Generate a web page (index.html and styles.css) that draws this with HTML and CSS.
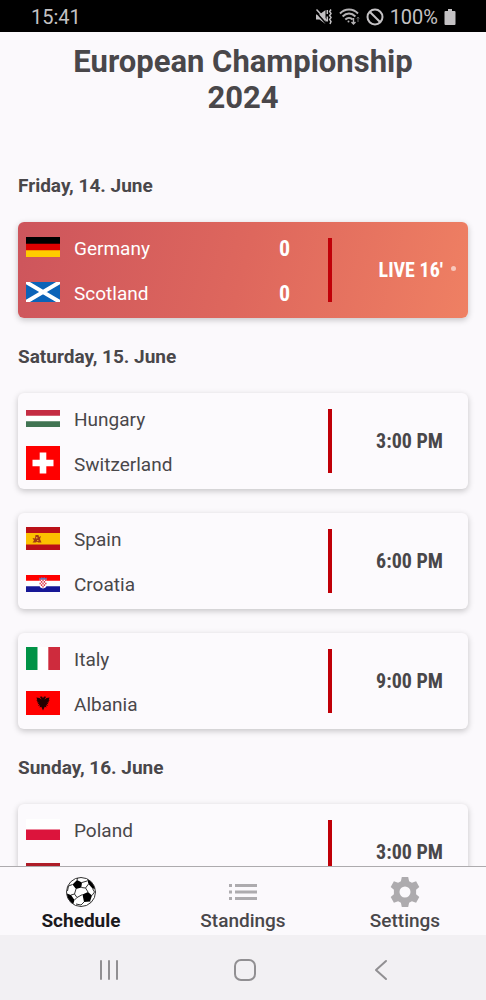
FILE: index.html
```html
<!DOCTYPE html>
<html lang="en">
<head>
<meta charset="utf-8">
<meta name="viewport" content="width=device-width, initial-scale=1">
<title>European Championship 2024</title>
<link rel="stylesheet" href="styles.css">
</head>
<body>
<div class="screen">
  <div class="status">
    <span class="clock">15:41</span>
    <span class="indicators">
      <svg width="18" height="18" viewBox="0 0 18 18" fill="#c4c2c4" aria-hidden="true"><path d="M1 6.500h3.500L10.500 2v14l-6-4.500H1z"/><path d="M0 3L12 16.500" stroke="#000" stroke-width="1.500"/><path d="M1.500 1.500L12 13" stroke="#c4c2c4" stroke-width="1.500"/><path d="M12.300 2v4M12.300 8.500v5M16 1.500l-1.300 2L16 5.500l-1.300 2L16 9.500l-1.300 2 1.300 2-1 2.500" fill="none" stroke="#c4c2c4" stroke-width="1.500"/></svg>
      <svg width="21" height="18" viewBox="0 0 21 18" fill="none" stroke="#b4b2b4" stroke-width="1.9" aria-hidden="true"><path d="M1 5.500C6 .2 14 .2 19 5.500M3.600 8.500C7.500 4.500 12.500 4.500 16.400 8.500M6.300 11.500C8.500 9.300 11.500 9.300 13.700 11.500"/><circle cx="9.500" cy="13.500" r="1" fill="#b4b2b4" stroke="none"/><path d="M14.500 10v6M12.500 14l2 2 2-2" stroke-width="1.400"/><path d="M19 14V9M17.800 10.500L19 9l1.200 1.500" stroke="#666" stroke-width="1"/></svg>
      <svg width="18" height="18" viewBox="0 0 18 18" fill="none" stroke="#c4c2c4" stroke-width="2" aria-hidden="true"><circle cx="9" cy="9" r="7.500"/><path d="M3.700 3.700l10.600 10.600"/></svg>
      <span class="level">100%</span>
      <svg width="12" height="18" viewBox="0 0 12 18" fill="#c4c2c4" aria-hidden="true"><path d="M4 1h4v2h2.500q1 0 1 1v12q0 1-1 1h-9q-1 0-1-1V4q0-1 1-1H4z"/></svg>
    </span>
  </div>

  <main class="schedule">
    <h1 class="title">European Championship 2024</h1>

    <section class="day">
      <h2 class="date">Friday, 14. June</h2>
      <article class="match live">
        <div class="teams">
          <div class="team">
            <svg class="flag" viewBox="0 0 34 20"><path d="M0 0h34v20H0z"/><path fill="#d00" d="M0 6.700h34V20H0z"/><path fill="#fc0" d="M0 13.300h34V20H0z"/></svg>
            <span class="name">Germany</span><span class="score">0</span>
          </div>
          <div class="team">
            <svg class="flag" viewBox="0 0 34 20"><path fill="#0b63b8" d="M0 0h34v20H0z"/><path stroke="#fff" stroke-width="4" d="M0 0l34 20M34 0L0 20"/></svg>
            <span class="name">Scotland</span><span class="score">0</span>
          </div>
        </div>
        <div class="bar"></div>
        <div class="time">LIVE 16'<span class="dot"></span></div>
      </article>
    </section>

    <section class="day">
      <h2 class="date">Saturday, 15. June</h2>
      <article class="match">
        <div class="teams">
          <div class="team">
            <svg class="flag" viewBox="0 0 34 17"><path fill="#fff" d="M0 0h34v17H0z"/><path fill="#c52d43" d="M0 0h34v5.700H0z"/><path fill="#417453" d="M0 11.300h34V17H0z"/></svg>
            <span class="name">Hungary</span>
          </div>
          <div class="team">
            <svg class="flag" viewBox="0 0 34 34"><path fill="red" d="M0 0h34v34H0z"/><path fill="#fff" d="M13.700 6.500h6.600v7.200h7.200v6.600h-7.200v7.200h-6.600v-7.200H6.500v-6.600h7.200z"/></svg>
            <span class="name">Switzerland</span>
          </div>
        </div>
        <div class="bar"></div>
        <div class="time">3:00 PM</div>
      </article>
      <article class="match">
        <div class="teams">
          <div class="team">
            <svg class="flag" viewBox="0 0 34 23"><path fill="#ba1018" d="M0 0h34v23H0z"/><path fill="#fcc000" d="M0 6h34v11.500H0z"/><path fill="#a33a14" d="M9.500 8h3l.5 2 2-1-1 3 1.500 3.500H12l-1-1-1 1H6.500L8 13.500 6.500 11l2.500.5z"/><path fill="#e8a030" d="M10 10h1.500v1.500H10zM11 13h1.500v1H11z"/></svg>
            <span class="name">Spain</span>
          </div>
          <div class="team">
            <svg class="flag" viewBox="0 0 34 17"><path fill="#fff" d="M0 0h34v17H0z"/><path fill="red" d="M0 0h34v5.700H0z"/><path fill="#171796" d="M0 11.300h34V17H0z"/><path fill="#fff" d="M13.500 4.500h7V10q0 3-3.500 3.500-3.500-.5-3.500-3.500z"/><path fill="#e0384a" d="M13.500 4.500h1.400v1.600h-1.400zM16.300 4.500h1.400v1.600h-1.400zM19.100 4.500h1.400v1.600h-1.400zM14.900 6.100h1.400v1.600h-1.400zM17.700 6.100h1.400v1.600h-1.400zM13.500 7.700h1.400v1.600h-1.400zM16.300 7.700h1.400v1.600h-1.400zM19.100 7.700h1.400v1.600h-1.400zM14.900 9.300h1.400v1.600h-1.400zM17.700 9.300h1.400v1.600h-1.400zM16.300 10.900h1.400v1.600h-1.400z"/><path fill="#5878c0" d="M13 2.600l1.500.8 1-1.200 1.500.8 1.500-.8 1 1.200 1.500-.8-.5 1.900h-7z"/></svg>
            <span class="name">Croatia</span>
          </div>
        </div>
        <div class="bar"></div>
        <div class="time">6:00 PM</div>
      </article>
      <article class="match">
        <div class="teams">
          <div class="team">
            <svg class="flag" viewBox="0 0 34 23"><path fill="#fff" d="M0 0h34v23H0z"/><path fill="#009246" d="M0 0h11.500v23H0z"/><path fill="#ce2b3d" d="M22.300 0H34v23H22.300z"/></svg>
            <span class="name">Italy</span>
          </div>
          <div class="team">
            <svg class="flag" viewBox="0 0 34 24"><path fill="red" d="M0 0h34v24H0z"/><path fill="#210000" d="M17 7.200l-1-1.700-2.300.2 1 1.300.9 1.500-2.200-1.500-3-.5.800 2-.9.800 1.400.7-.9 1.300 1.800.1-1 1.800 1.900-.5-1.500 2.300 2.200-.8-.7 2.200 1.800-.6 1.700 3.600 1.700-3.600 1.800.6-.7-2.200 2.200.8-1.500-2.300 1.900.5-1-1.800 1.800-.1-.9-1.300 1.400-.7-.9-.8.800-2-3 .5L18.400 8.500l.9-1.500 1-1.300-2.300-.2z"/></svg>
            <span class="name">Albania</span>
          </div>
        </div>
        <div class="bar"></div>
        <div class="time">9:00 PM</div>
      </article>
    </section>

    <section class="day">
      <h2 class="date">Sunday, 16. June</h2>
      <article class="match">
        <div class="teams">
          <div class="team">
            <svg class="flag" viewBox="0 0 34 21"><path fill="#fff" d="M0 0h34v21H0z"/><path fill="#dc143c" d="M0 10.500h34V21H0z"/></svg>
            <span class="name">Poland</span>
          </div>
          <div class="team">
            <svg class="flag" viewBox="0 0 34 23"><path fill="#fff" d="M0 0h34v23H0z"/><path fill="#ae1c28" d="M0 0h34v7.700H0z"/><path fill="#21468b" d="M0 15.300h34V23H0z"/></svg>
          </div>
        </div>
        <div class="bar"></div>
        <div class="time">3:00 PM</div>
      </article>
    </section>
  </main>

  <nav class="tabs">
    <a class="tab active" href="#schedule" aria-current="page">
      <svg width="32" height="32" viewBox="0 0 32 32" aria-hidden="true"><clipPath id="ball"><circle cx="16" cy="16" r="14.500"/></clipPath><circle cx="16" cy="16" r="14.500" fill="#fff"/><g clip-path="url(#ball)"><path d="M12 4l5 2.500-.7 5L11 13 7.500 8.500zM17.500 18.500l5.500-2.500 4 3.500-2 6-6 .5zM0 17l6 2 3.500 5-1.500 5-8-3zM22 3l5.500 3 3 7-3-.5-4-4.500z"/><path d="M11 13l-1.500 5L6 19M16.300 11.500l4.200.5 2.500 4M9.500 18l2.500 3.500 5.500-3M12 21.500L9.500 24M20.500 12L23.500 8M17 6.500L22 5M7.500 8.500L3.500 10 2.500 15M12 4l1-3M27 19.500l2.500-3.500-2-3.500M19 26l-3 3-5-1M25 25.500l1.500 1.500" fill="none" stroke="#333" stroke-width="1"/></g><circle cx="16" cy="16" r="14.500" fill="none" stroke="#333" stroke-width="1"/></svg>
      <span>Schedule</span>
    </a>
    <a class="tab" href="#standings">
      <svg width="32" height="32" viewBox="0 0 32 32" fill="#adabae" aria-hidden="true"><path d="M2 8h3v3H2zM8 8h22v3H8zM2 14.500h3v3H2zM8 14.500h22v3H8zM2 21h3v3H2zM8 21h22v3H8z"/></svg>
      <span>Standings</span>
    </a>
    <a class="tab" href="#settings">
      <svg width="32" height="32" viewBox="0 0 32 32" fill="#adabae" aria-hidden="true"><path fill-rule="evenodd" d="M12.800 1h6.400l.9 4.200 2.800 1.600 4.200-1.500 3.200 5.600-3.200 2.900v4.400l3.200 2.900-3.200 5.600-4.200-1.500-2.800 1.600-.9 4.200h-6.400l-.9-4.200-2.800-1.600-4.200 1.500-3.200-5.600 3.200-2.900v-4.400l-3.200-2.900 3.200-5.600 4.200 1.500 2.800-1.600zM16 10.500a5.500 5.500 0 1 0 0 11 5.500 5.500 0 0 0 0-11z"/></svg>
      <span>Settings</span>
    </a>
  </nav>

  <div class="system">
    <button class="key" type="button" aria-label="Recent apps"><svg width="24" height="24" viewBox="0 0 24 24"><path d="M4 3v18M12 3v18M20 3v18"/></svg></button>
    <button class="key" type="button" aria-label="Home"><svg width="24" height="24" viewBox="0 0 24 24"><rect x="2" y="2" width="20" height="20" rx="6"/></svg></button>
    <button class="key" type="button" aria-label="Back"><svg width="24" height="24" viewBox="0 0 24 24"><path d="M17 3L7 12l10 9"/></svg></button>
  </div>
</div>
</body>
</html>
```
FILE: styles.css
```css
* {
  box-sizing: border-box;
}

body {
  margin: 0;
  background: #fbf9fc;
  color: #49474a;
  font-family: Roboto, "Liberation Sans", sans-serif;
}

.screen {
  display: flex;
  flex-direction: column;
  height: 100vh;
  overflow: hidden;
}

.status {
  display: flex;
  align-items: center;
  justify-content: space-between;
  flex: none;
  height: 32px;
  padding: 2px 30px 0 31px;
  background: #000;
  color: #c4c2c4;
  font-size: 20px;
}

.indicators {
  display: flex;
  align-items: center;
  gap: 6px;
}

.schedule {
  flex: 1;
  min-height: 0;
  padding: 12px 18px 0;
  overflow: hidden;
}

.title {
  max-width: 380px;
  margin: 0 auto 59px;
  font-size: 31px;
  font-weight: 700;
  line-height: 36px;
  text-align: center;
}

.day {
  margin-bottom: 28px;
}

.date {
  margin: 0 0 25px;
  font-size: 19px;
  font-weight: 700;
  line-height: 22px;
}

.match {
  display: flex;
  align-items: center;
  height: 96px;
  border-radius: 6px;
  background: #fcfafd;
  box-shadow: 0 2px 6px rgba(0, 0, 0, 0.22);
}

.match + .match {
  margin-top: 24px;
}

.live {
  background: linear-gradient(105deg, #cd555c, #de675d 50%, #ef8063);
  color: #fff;
}

.teams {
  flex: 1;
  padding: 1px 38px 0 8px;
}

.team {
  display: flex;
  align-items: center;
  height: 45px;
}

.flag {
  flex: none;
  width: 34px;
  margin: 0 14px 2px 0;
}

.name {
  flex: 1;
  font-size: 19px;
}

.score {
  font-family: "Roboto Condensed", Roboto, sans-serif;
  font-size: 22px;
  font-weight: 700;
}

.bar {
  flex: none;
  width: 4px;
  height: 64px;
  background: #c00008;
}

.time {
  position: relative;
  flex: none;
  width: 136px;
  padding-right: 25px;
  font-family: "Roboto Condensed", Roboto, sans-serif;
  font-size: 20px;
  font-weight: 700;
  text-align: right;
}

.dot {
  position: absolute;
  top: 50%;
  right: 12px;
  width: 5px;
  height: 5px;
  margin-top: -4px;
  border-radius: 50%;
  background: #f8c8bc;
}

.tabs {
  display: flex;
  flex: none;
  height: 69px;
  padding-top: 9px;
  border-top: 1px solid #adabae;
}

.tab {
  display: flex;
  flex: 1;
  flex-direction: column;
  align-items: center;
  color: #49474a;
  font-size: 19px;
  font-weight: 500;
  line-height: 26px;
  text-decoration: none;
}

.active {
  color: #1b191c;
  font-weight: 700;
}

.system {
  display: flex;
  align-items: center;
  justify-content: center;
  flex: none;
  gap: 112px;
  height: 65px;
  padding: 4px 0 0 4px;
  background: #f2f0f3;
}

.key {
  display: flex;
  padding: 0;
  border: 0;
  background: none;
}

.key svg {
  fill: none;
  stroke: #918f92;
  stroke-width: 2;
  stroke-linecap: round;
  stroke-linejoin: round;
}
```
